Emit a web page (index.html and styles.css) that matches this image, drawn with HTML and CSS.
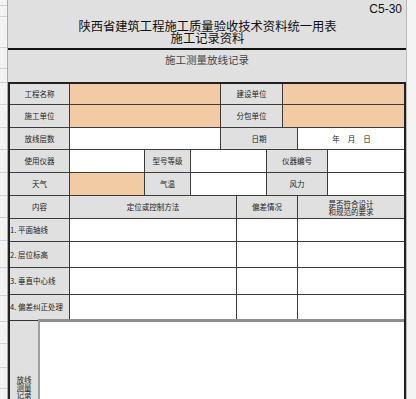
FILE: index.html
```html
<!DOCTYPE html>
<html lang="zh-CN">
<head>
<meta charset="utf-8">
<title>施工测量放线记录</title>
<link rel="stylesheet" href="styles.css">
</head>
<body>
<div class="screen">
  <div class="rowhead">
    <div class="rh h6"></div><div class="rh h11"></div><div class="rh h31"></div><div class="rh h21"></div>
    <div class="rh h14"></div><div class="rh h22"></div><div class="rh h23"></div><div class="rh h22"></div>
    <div class="rh h23"></div><div class="rh h23"></div><div class="rh h22"></div><div class="rh h23"></div>
    <div class="rh h27"></div><div class="rh h28"></div><div class="rh h26"></div><div class="rh h22"></div>
    <div class="rh h24"></div><div class="rh h21"></div>
  </div>
  <div class="main">
    <div class="head">
      <div class="code">C5-30</div>
      <div class="title">陕西省建筑工程施工质量验收技术资料统一用表<br>施工记录资料</div>
      <div class="rule"></div>
      <div class="subtitle">施工测量放线记录</div>
    </div>
    <div class="sheet">
      <div class="row cols-a rh20 first">
        <div class="cell lab">工程名称</div><div class="cell fill"></div>
        <div class="cell lab">建设单位</div><div class="cell fill"></div>
      </div>
      <div class="row cols-a rh23">
        <div class="cell lab">施工单位</div><div class="cell fill"></div>
        <div class="cell lab">分包单位</div><div class="cell fill"></div>
      </div>
      <div class="row cols-b rh22">
        <div class="cell lab">放线层数</div><div class="cell"></div>
        <div class="cell lab">日期</div><div class="cell date"><span>年</span><span>月</span><span>日</span></div>
      </div>
      <div class="row cols-c rh23">
        <div class="cell lab">使用仪器</div><div class="cell"></div>
        <div class="cell lab">型号等级</div><div class="cell"></div>
        <div class="cell lab">仪器编号</div><div class="cell"></div>
      </div>
      <div class="row cols-c rh23">
        <div class="cell lab">天气</div><div class="cell fill"></div>
        <div class="cell lab">气温</div><div class="cell"></div>
        <div class="cell lab">风力</div><div class="cell"></div>
      </div>
      <div class="row cols-d rh23">
        <div class="cell lab">内容</div><div class="cell lab">定位或控制方法</div>
        <div class="cell lab">偏差情况</div><div class="cell lab two">是否符合设计<br>和规范的要求</div>
      </div>
      <div class="row cols-d rh23">
        <div class="cell lab left">1. 平面轴线</div><div class="cell"></div><div class="cell"></div><div class="cell"></div>
      </div>
      <div class="row cols-d rh26">
        <div class="cell lab left">2. 层位标高</div><div class="cell"></div><div class="cell"></div><div class="cell"></div>
      </div>
      <div class="row cols-d rh27">
        <div class="cell lab left">3. 垂直中心线</div><div class="cell"></div><div class="cell"></div><div class="cell"></div>
      </div>
      <div class="row cols-d rh25">
        <div class="cell lab left">4. 偏差纠正处理</div><div class="cell"></div><div class="cell"></div><div class="cell"></div>
      </div>
      <div class="row notes">
        <div class="side"><span class="vtext">放线测量记录</span></div>
        <div class="box"></div>
      </div>
    </div>
  </div>
  <div class="edge"></div>
</div>
</body>
</html>
```
FILE: styles.css
```css
* { box-sizing: border-box; }
html, body { margin: 0; padding: 0; background: #ffffff; }
body {
  font-family: "Noto Sans CJK SC", "Liberation Sans", sans-serif;
  color: #1a1a1a;
}
.screen {
  display: flex;
  width: 416px;
  height: 399px;
  overflow: hidden;
}
.rowhead {
  flex: none;
  width: 8px;
  background: #f3f3f3;
  border-right: 1px solid #a9a9a9;
}
.rh { border-bottom: 1px solid #d2d2d2; }
.h6 { height: 6px; } .h11 { height: 11px; } .h14 { height: 14px; }
.h21 { height: 21px; } .h22 { height: 22px; } .h23 { height: 23px; }
.h24 { height: 24px; } .h26 { height: 26px; } .h27 { height: 27px; }
.h28 { height: 28px; } .h31 { height: 31px; }

.main {
  flex: none;
  width: 398px;
  background: #e0e0e0;
}
.edge {
  flex: 1;
  background: #f4f4f4;
  border-left: 1px solid #b9b9b9;
}

/* header */
.head {
  height: 82px;
  display: flex;
  flex-direction: column;
}
.code {
  height: 16px;
  padding: 3px 4px 0 0;
  text-align: right;
  font-family: "Liberation Sans", sans-serif;
  font-size: 12px;
  line-height: 12px;
  color: #111;
}
.title {
  margin-top: 4px;
  text-align: center;
  font-size: 12.3px;
  line-height: 12px;
  color: #111;
  padding-left: 1px;
}
.rule {
  margin-top: 4px;
  height: 2px;
  background: #111;
}
.subtitle {
  margin-top: 4px;
  text-align: center;
  font-size: 10.5px;
  line-height: 12px;
  color: #444;
}

/* table */
.sheet {
  border: 2px solid #222;
  border-bottom: none;
  height: 317px;
  display: flex;
  flex-direction: column;
}
.row {
  display: grid;
  border-top: 1px solid #3c3c3c;
}
.row.first { border-top: none; }
.cols-a { grid-template-columns: 59px 151px 62px 122px; }
.cols-b { grid-template-columns: 59px 151px 77px 107px; }
.cols-c { grid-template-columns: 59px 75px 46px 76px 61px 77px; }
.cols-d { grid-template-columns: 59px 167px 61px 107px; }
.rh20 { height: 20px; }
.rh22 { height: 22px; }
.rh23 { height: 23px; }
.rh25 { height: 25px; }
.rh26 { height: 26px; }
.rh27 { height: 27px; }

.cell {
  background: #ffffff;
  border-left: 1px solid #3c3c3c;
  display: flex;
  align-items: center;
  justify-content: center;
  font-size: 7.5px;
  line-height: 8px;
  color: #222;
  white-space: nowrap;
}
.cell:first-child { border-left: none; }
.cell.lab { background: #e0e0e0; }
.cell.fill { background: #f2cba5; }
.cell.left { justify-content: flex-start; padding-left: 0; }
.cell.two { text-align: center; line-height: 8px; padding-top: 1px; }
.cell.date { gap: 8px; padding-left: 1px; }

.notes {
  flex: 1;
  grid-template-columns: 28px 1fr;
  border-top: none;
}
.side {
  background: #e0e0e0;
  border-top: 1px solid #333;
  margin-top: 1px;
  padding-top: 55px;
  display: flex;
  justify-content: center;
  align-items: flex-start;
}
.vtext {
  display: block;
  width: 16px;
  font-size: 7.5px;
  line-height: 7.5px;
  text-align: center;
  color: #222;
}
.box {
  background: #ffffff;
  border-top: 3px solid #8f8f8f;
  border-left: 2px solid #a0a0a0;
}
```
